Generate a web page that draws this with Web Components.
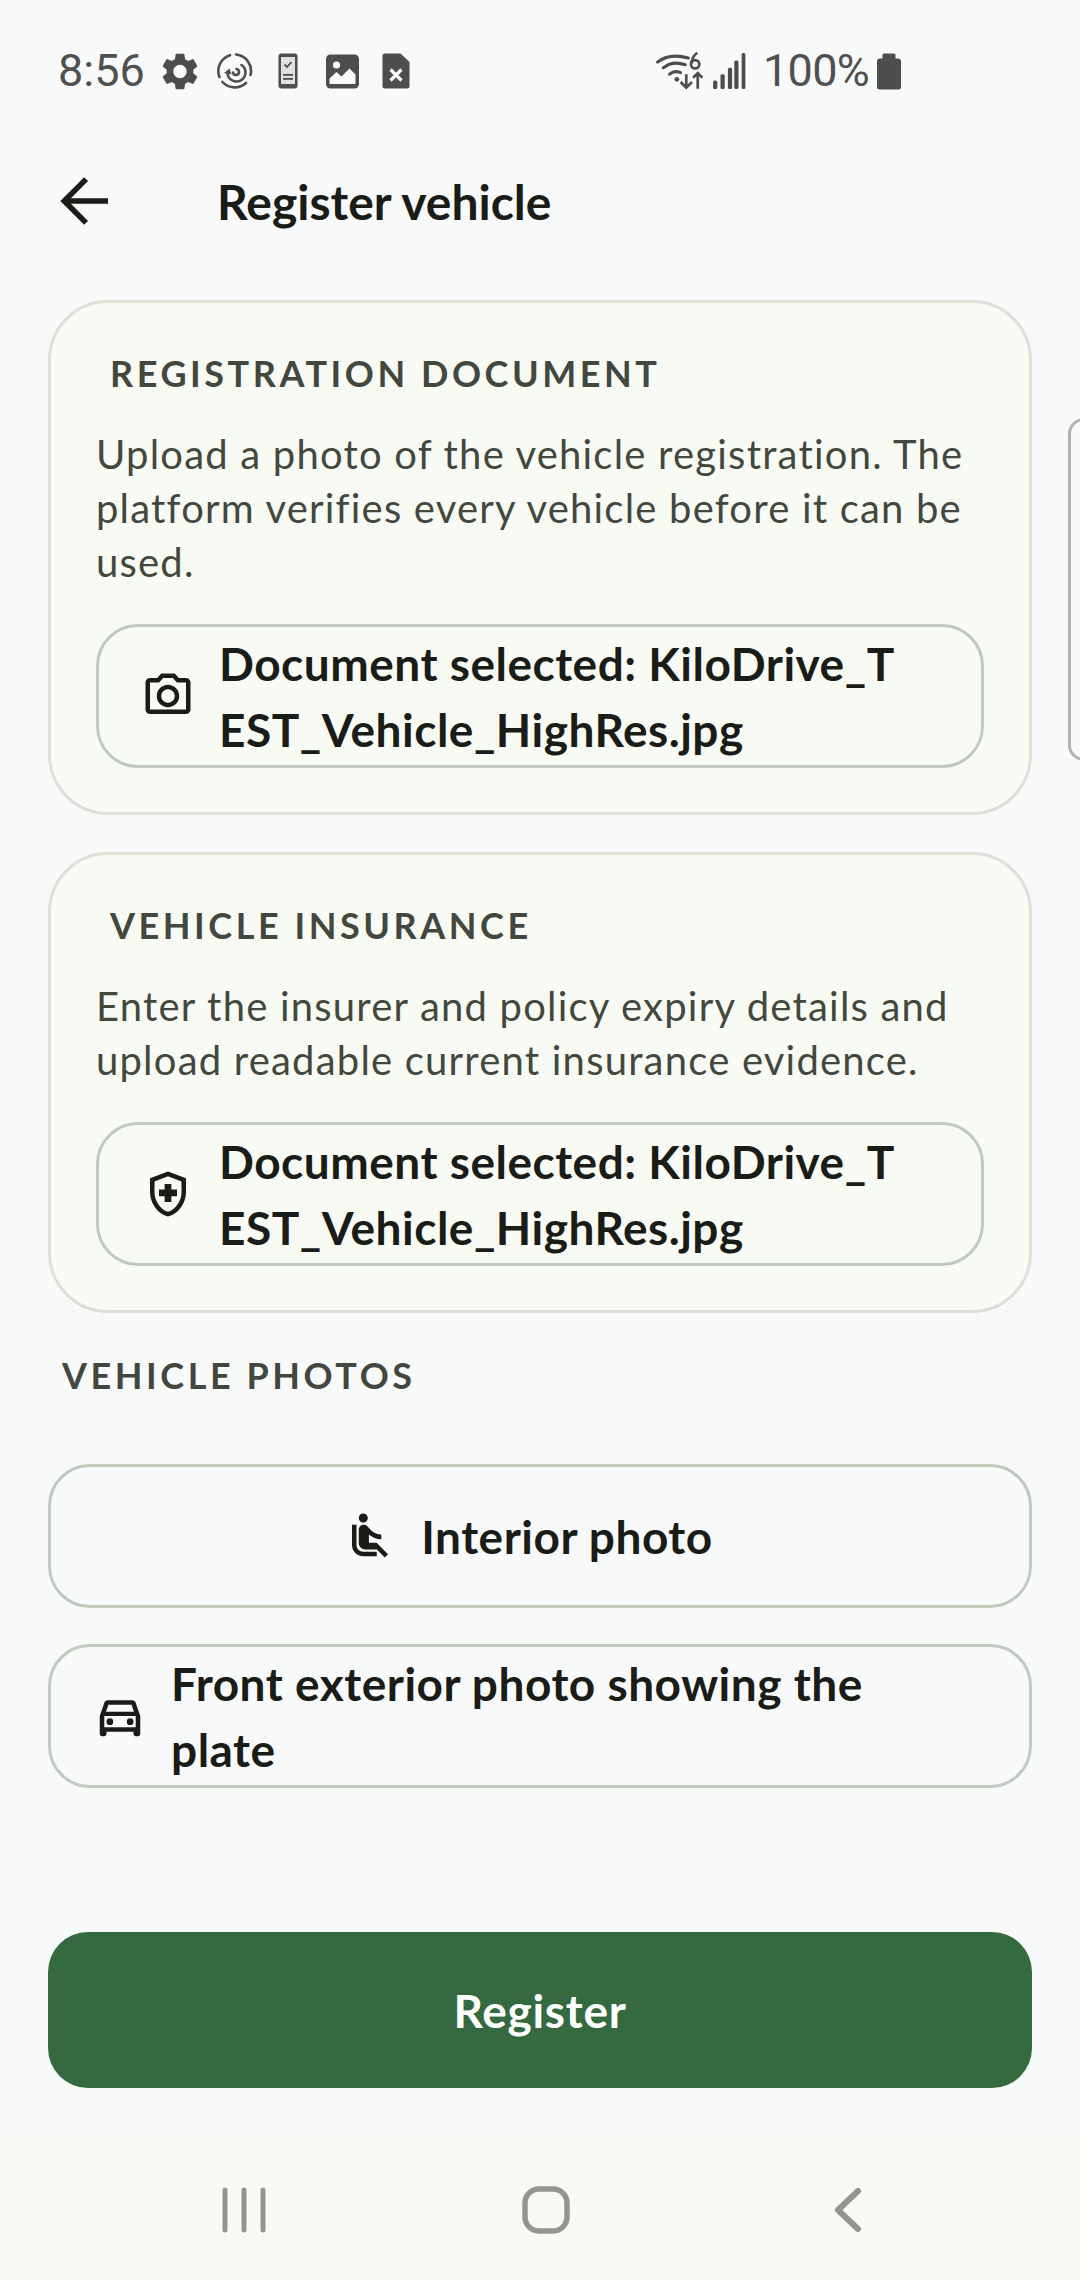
<!DOCTYPE html>
<html lang="en-us">
<head>
<meta charset="utf-8">
<title>Register vehicle</title>
<style>
    html, body { margin: 0; padding: 0; background: #f8fafa; }
    body { width: 1080px; height: 2280px; overflow: hidden; font-family: Lato, "Noto Sans", sans-serif; color: #191c17; }
</style>
</head>
<body>

<template id="statusBarTemplate">
    <style>
        :host { display: flex; height: 136px; box-sizing: border-box; padding: 47px 179px 0 58px; justify-content: space-between; align-items: flex-start; color: #505050; font-family: Roboto, sans-serif; font-weight: 400; font-size: 45px; line-height: 48px; }
        .side { display: flex; align-items: center; height: 48px; }
        .battery-text { letter-spacing: -0.7px; }
        svg { display: block; fill: #4d4d4d; flex: none; }
    </style>
    <div class="side">
        <span>8:56</span>
        <svg style="margin-left:17px" width="36" height="37" viewBox="2.5 2 19 20"><path d="M19.14 12.94c.04-.3.06-.61.06-.94 0-.32-.02-.64-.07-.94l2.03-1.58c.18-.14.23-.41.12-.61l-1.92-3.32c-.12-.22-.37-.29-.59-.22l-2.39.96c-.5-.38-1.03-.7-1.62-.94l-.36-2.54c-.04-.24-.24-.41-.48-.41h-3.84c-.24 0-.43.17-.47.41l-.36 2.54c-.59.24-1.13.57-1.62.94l-2.39-.96c-.22-.08-.47 0-.59.22L2.74 8.87c-.12.21-.08.47.12.61l2.03 1.58c-.05.3-.09.63-.09.94s.02.64.07.94l-2.03 1.58c-.18.14-.23.41-.12.61l1.92 3.32c.12.22.37.29.59.22l2.39-.96c.5.38 1.03.7 1.62.94l.36 2.54c.05.24.24.41.48.41h3.84c.24 0 .44-.17.47-.41l.36-2.54c.59-.24 1.13-.56 1.62-.94l2.39.96c.22.08.47 0 .59-.22l1.92-3.32c.12-.22.07-.47-.12-.61l-2.01-1.58zM12 15.6c-1.98 0-3.6-1.62-3.6-3.6s1.62-3.6 3.6-3.6 3.6 1.62 3.6 3.6-1.62 3.6-3.6 3.6z"/></svg>
        <svg style="margin-left:19px" width="36" height="36" viewBox="0 0 36 36"><g fill="none" stroke="#4d4d4d" stroke-width="2.6" stroke-linecap="round"><path d="M13 2.200A16.500 16.500 0 0 0 2.500 24"/><path d="M5.500 29A16.500 16.500 0 0 0 29 30"/><path d="M33.500 22A16.500 16.500 0 0 0 19 1.500"/><path d="M24.500 12A9 9 0 1 1 10.500 20"/><path d="M19.500 16a3 3 0 1 1-3.500 3.500"/></g><path d="M7 20l5.500-4.500 2 6z"/></svg>
        <svg style="margin-left:25px" width="20" height="36" viewBox="0 0 20 36"><rect x="0.5" y="0.5" width="19" height="35" rx="3"/><rect x="3" y="4" width="14" height="27" fill="#dfe1e0"/><path d="M6.500 11.500l2.500 2.500 4.500-5" fill="none" stroke="#4d4d4d" stroke-width="1.800"/><rect x="5" y="21" width="10" height="1.800"/><rect x="5" y="25" width="10" height="1.800"/></svg>
        <svg style="margin-left:28px" width="33" height="35" viewBox="0 0 33 35"><rect width="33" height="34" rx="4.500" y="0.500"/><circle cx="10.500" cy="11" r="3.600" fill="#f8fafa"/><path d="M3.500 30v-5.500l7-6.500 5 4.500 8-8 6 6V30z" fill="#f8fafa"/></svg>
        <svg style="margin-left:23px" width="28" height="36" viewBox="0 0 28 36"><path d="M3 0.500h15.500L27.500 9v24a2.500 2.500 0 0 1-2.500 2.500H3A2.500 2.500 0 0 1 0.500 33V3A2.500 2.500 0 0 1 3 0.500z"/><path d="M8.500 16.500l11 11m0-11l-11 11" stroke="#f8fafa" stroke-width="3.200" fill="none"/></svg>
    </div>
    <div class="side">
        <svg width="48" height="40" viewBox="0 0 46 38" style="margin-right:9px"><g fill="none" stroke="#4d4d4d" stroke-linecap="round"><path d="M1.500 10.500C9 4.500 20 3.500 31 6.500" stroke-width="3"/><path d="M7 16C13 11 21 10.500 28 13" stroke-width="3"/><path d="M13 22c3-2.500 7-3 10.500-1.500" stroke-width="3"/></g><circle cx="20" cy="27" r="2.300"/><g fill="none" stroke="#4d4d4d" stroke-width="2.600"><path d="M29 22v12.500M23.500 29.500l5.500 5.500 5.500-5.500"/><path d="M40 36V21M35.500 25.500l4.500-4.500 4.500 4.500"/><circle cx="37.500" cy="12.500" r="4"/><path d="M34 12c.5-5 2-8 5.500-10.500"/></g></svg>
        <svg width="33" height="36" viewBox="0 0 31 34" style="margin-right:17px"><rect x="0" y="26" width="4" height="8" rx="1.500"/><rect x="7" y="20" width="4" height="14" rx="1.500"/><rect x="14" y="14" width="4" height="20" rx="1.500"/><rect x="20" y="7" width="4" height="27" rx="1.500"/><rect x="27" y="0" width="3.500" height="34" rx="1.500"/></svg>
        <span class="battery-text">100%</span>
        <svg style="margin-left:8px" width="24" height="37" viewBox="0 0 24 36"><path d="M7 0h10a1.500 1.500 0 0 1 1.500 1.500V5H21a3 3 0 0 1 3 3v25.500a2.500 2.500 0 0 1-2.500 2.500h-19A2.500 2.500 0 0 1 0 33.500V8a3 3 0 0 1 3-3h2.500V1.500A1.500 1.500 0 0 1 7 0z"/></svg>
    </div>
</template>

<template id="appBarTemplate">
    <style>
        :host { display: flex; align-items: center; height: 130px; padding-left: 48px; flex: none; }
        svg { width: 72px; height: 72px; fill: none; stroke: #191c17; stroke-width: 1.85; flex: none; display: block; }
        .title { margin-left: 97px; font-size: 48px; font-weight: 700; }
    </style>
    <svg viewBox="0 0 24 24"><path d="M20 12H5.500M12.700 4.700 5.400 12l7.300 7.300"/></svg>
    <div class="title"><slot></slot></div>
</template>

<template id="sectionLabelTemplate">
    <style>
        :host { display: block; height: 50px; line-height: 50px; padding-left: 14px; font-size: 36px; font-weight: 700; letter-spacing: 3.55px; color: #43483f; white-space: nowrap; }
    </style>
    <slot></slot>
</template>

<template id="sectionCardTemplate">
    <style>
        :host { display: block; box-sizing: border-box; border: 3px solid #dde0d9; border-radius: 60px; background: #f8fbf3; padding: 45px 45px 44px; }
        .body { margin: 29px 0 35px; font-size: 40px; line-height: 54px; color: #43483f; letter-spacing: 1.2px; white-space: nowrap; }
    </style>
    <section-label><slot name="label"></slot></section-label>
    <div class="body"><slot name="body"></slot></div>
    <slot></slot>
</template>

<template id="uploadButtonTemplate">
    <style>
        :host { display: flex; box-sizing: border-box; height: 144px; border: 3px solid #c2c9bf; border-radius: 42px; align-items: center; padding-left: 33px; gap: 15px; font-size: 46px; letter-spacing: 0.5px; line-height: 66px; font-weight: 700; color: #191c17; white-space: nowrap; }
        :host([centered]) { justify-content: center; padding-right: 33px; padding-left: 0; }
        .icon { width: 72px; height: 72px; flex: none; display: flex; align-items: center; justify-content: center; }
        .text { padding-top: 2px; }
    </style>
    <div class="icon"><slot name="icon"></slot></div>
    <div class="text"><slot></slot></div>
</template>

<template id="submitButtonTemplate">
    <style>
        :host { display: flex; height: 156px; border-radius: 40px; background: #35693f; color: #fff; align-items: center; justify-content: center; font-size: 46px; letter-spacing: 0.7px; font-weight: 700; }
    </style>
    <slot></slot>
</template>

<template id="navBarTemplate">
    <style>
        :host { display: flex; flex: none; height: 144px; background: #f8fbf3; align-items: center; box-sizing: border-box; padding: 4px 0 0 184px; gap: 182px; }
        .item { width: 120px; display: flex; justify-content: center; }
        svg { display: block; fill: none; stroke: #939592; stroke-linecap: round; stroke-linejoin: round; }
    </style>
    <div class="item"><svg width="44" height="46" viewBox="0 0 44 46"><path d="M3 3v40M22 3v40M41 3v40" stroke-width="5"/></svg></div>
    <div class="item"><svg width="48" height="48" viewBox="0 0 48 48"><rect x="3" y="3" width="42" height="42" rx="14" stroke-width="5.500"/></svg></div>
    <div class="item"><svg width="32" height="48" viewBox="0 0 32 48"><path d="M26 5L6 24l20 19" stroke-width="6"/></svg></div>
</template>

<template id="sidePeekTemplate">
    <style>
        :host { display: block; position: absolute; left: 1068px; top: 418px; width: 40px; height: 343px; box-sizing: border-box; border: 3px solid #b0b2b0; border-radius: 16px; }
    </style>
</template>

<template id="registerPageTemplate">
    <style>
        :host { display: flex; flex-direction: column; position: relative; width: 1080px; height: 2280px; overflow: hidden; background: #f8fafa; }
        main { flex: 1; display: flex; flex-direction: column; padding: 34px 48px 0; gap: 37px; }
        .photos-label { margin-bottom: 27px; }
        .photos { display: flex; flex-direction: column; gap: 36px; }
        .footer { padding: 0 48px 48px; }
        svg { display: block; fill: #191c17; }
    </style>
    <status-bar></status-bar>
    <app-bar>Register vehicle</app-bar>
    <side-peek></side-peek>
    <main>
        <section-card>
            <span slot="label">REGISTRATION DOCUMENT</span>
            <span slot="body">Upload a photo of the vehicle registration. The<br>platform verifies every vehicle before it can be<br>used.</span>
            <upload-button>
                <svg slot="icon" width="54" height="54" viewBox="0 0 24 24"><path d="M14.120 4l1.830 2H20v12H4V6h4.050l1.830-2h4.240M15 2H9L7.170 4H4c-1.100 0-2 .9-2 2v12c0 1.100.9 2 2 2h16c1.100 0 2-.9 2-2V6c0-1.100-.9-2-2-2h-3.170L15 2zm-3 7c1.650 0 3 1.350 3 3s-1.350 3-3 3-3-1.350-3-3 1.350-3 3-3zm0-2c-2.760 0-5 2.240-5 5s2.240 5 5 5 5-2.240 5-5-2.240-5-5-5z"/></svg>
                Document selected: KiloDrive_T<br>EST_Vehicle_HighRes.jpg
            </upload-button>
        </section-card>
        <section-card>
            <span slot="label">VEHICLE INSURANCE</span>
            <span slot="body">Enter the insurer and policy expiry details and<br>upload readable current insurance evidence.</span>
            <upload-button>
                <svg slot="icon" width="54" height="54" viewBox="0 0 24 24"><path d="M10.500 13H8v-3h2.500V7.500h3V10H16v3h-2.500v2.500h-3V13zM12 2 4 5v6.090c0 5.050 3.410 9.760 8 10.910 4.590-1.150 8-5.860 8-10.910V5l-8-3zm6 9.090c0 4-2.550 7.700-6 8.830-3.450-1.130-6-4.820-6-8.830v-4.700l6-2.250 6 2.250v4.700z"/></svg>
                Document selected: KiloDrive_T<br>EST_Vehicle_HighRes.jpg
            </upload-button>
        </section-card>
        <section-label class="photos-label">VEHICLE PHOTOS</section-label>
        <div class="photos">
            <upload-button centered>
                <svg slot="icon" width="54" height="54" viewBox="0 0 24 24"><path d="M7.590 5.410c-.78-.78-.78-2.050 0-2.830.78-.78 2.050-.78 2.830 0 .78.78.78 2.050 0 2.830-.79.79-2.050.79-2.830 0zM6 16V7H4v9c0 2.760 2.240 5 5 5h6v-2H9c-1.660 0-3-1.340-3-3zm14 4.070L14.930 15H11.500v-3.680c1.400 1.150 3.600 2.160 5.500 2.160v-2.160c-1.660.02-3.610-.87-4.670-2.040l-1.400-1.550c-.19-.21-.43-.38-.69-.5-.29-.14-.62-.23-.96-.23h-.03C8.010 7 7 8.010 7 9.250V15c0 1.660 1.340 3 3 3h5.070l3.500 3.500L20 20.070z"/></svg>
                Interior photo
            </upload-button>
            <upload-button>
                <svg slot="icon" width="54" height="54" viewBox="0 0 24 24"><path d="M18.920 6.010C18.720 5.420 18.160 5 17.500 5h-11c-.66 0-1.210.42-1.420 1.010L3 12v8c0 .55.45 1 1 1h1c.55 0 1-.45 1-1v-1h12v1c0 .55.45 1 1 1h1c.55 0 1-.45 1-1v-8l-2.080-5.990zM6.850 7h10.290l1.080 3.110H5.770L6.850 7zM19 17H5v-5h14v5z"/><circle cx="7.500" cy="14.500" r="1.500"/><circle cx="16.500" cy="14.500" r="1.500"/></svg>
                Front exterior photo showing the<br>plate
            </upload-button>
        </div>
    </main>
    <div class="footer"><submit-button>Register</submit-button></div>
    <nav-bar></nav-bar>
</template>

<register-page></register-page>

<script id="src">
    // every element just clones its template into an open shadow root
    function defineFromTemplate(tag, templateId) {
        customElements.define(tag, class extends HTMLElement {
            constructor() {
                super();
                const template = document.getElementById(templateId).content;
                this.attachShadow({ mode: 'open' }).appendChild(template.cloneNode(true));
            }
        });
    }

    defineFromTemplate('status-bar', 'statusBarTemplate');
    defineFromTemplate('app-bar', 'appBarTemplate');
    defineFromTemplate('section-label', 'sectionLabelTemplate');
    defineFromTemplate('section-card', 'sectionCardTemplate');
    defineFromTemplate('upload-button', 'uploadButtonTemplate');
    defineFromTemplate('submit-button', 'submitButtonTemplate');
    defineFromTemplate('nav-bar', 'navBarTemplate');
    defineFromTemplate('side-peek', 'sidePeekTemplate');
    defineFromTemplate('register-page', 'registerPageTemplate');
</script>
</body>
</html>
